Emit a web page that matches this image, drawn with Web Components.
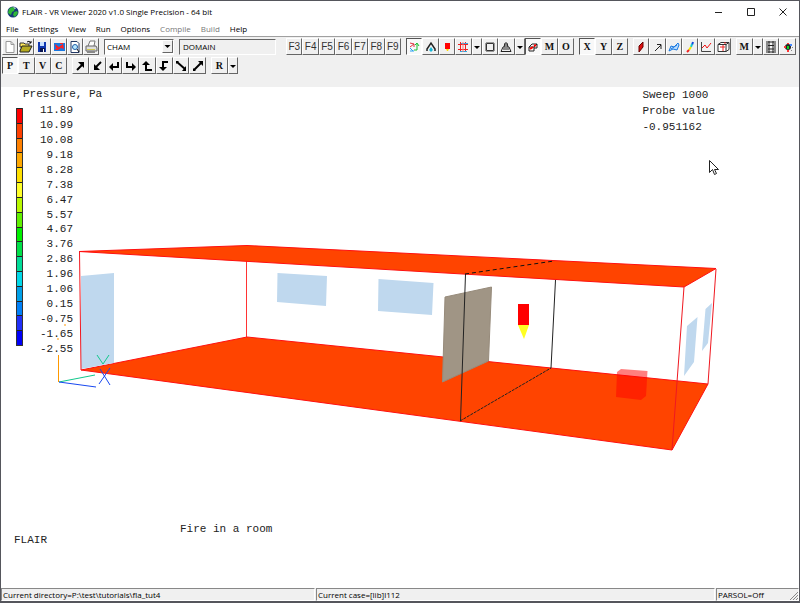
<!DOCTYPE html>
<html lang="en">
<head>
<meta charset="utf-8">
<title>FLAIR - VR Viewer</title>
<style>
html, body { margin: 0; min-height: 100%; }
body { background: #606066; font: 8px/12px "Open Sans", "Noto Sans", sans-serif; color: #000; }
</style>
</head>
<body>
<vr-window></vr-window>
<script>
const define = (name, html, setup) => {
  const t = document.createElement('template');
  t.innerHTML = html;
  customElements.define(name, class extends HTMLElement {
    constructor() {
      super();
      this.attachShadow({ mode: 'open' }).append(t.content.cloneNode(true));
    }
    connectedCallback() { if (setup) setup(this, this.shadowRoot); }
  });
};

const ICONS = {
  new: '<path d="M4 2.5h5l3 3v8H4z" fill="#fff" stroke="#999"/><path d="M9 2.5v3h3" fill="none" stroke="#999"/>',
  open: '<path d="M2 4h4l1 1h4v3H2z" fill="#ffe95a" stroke="#333"/><path d="M2 12l2-5h10l-3 6H2z" fill="#b5aa20" stroke="#222"/><path d="M9 3q2-2 4 1M13 2v2h-2" fill="none" stroke="#111"/>',
  save: '<path d="M4 3h8v10H4z" fill="#1038b0"/><path d="M6 3h4v4H6z" fill="#c8e0ff"/><path d="M6 9h5v4H6z" fill="#0a1550"/><path d="M9 10h1v3H9z" fill="#fff"/>',
  reload: '<path d="M3 4h11v8H3z" fill="#1878e0"/><path d="M4 5l4 3 4-3 1 5-3-1-3 2-2-2z" fill="#ff2020"/><path d="M4 10h3v1H4zM9 4h3v1H9z" fill="#f22"/>',
  find: '<path d="M4 2.5h6l2 2v9H4z" fill="#fff" stroke="#233a66"/><circle cx="8" cy="8" r="2.5" fill="#b8e8ff" stroke="#1e5ca8"/><path d="M10 10l2 3" stroke="#111"/>',
  print: '<path d="M5 7l2-5h5l-1 5" fill="#fff" stroke="#777"/><path d="M3 7h10l1 2v3H3z" fill="#ddd" stroke="#666"/><path d="M4 10h8v1H4z" fill="#d0c850"/><path d="M4 12h8v2H4z" fill="#888"/>',
  axes: '<path d="M4 4l4 1v3M4 8l4-3" fill="none" stroke="#e03040"/><path d="M4 9l3 3M4 12h4" fill="none" stroke="#28a0f0"/><path d="M8 11h3V5M9 6l2-2 2 3" fill="none" stroke="#18c030"/>',
  vertex: '<path d="M4 12V10l4-6 4 6v2" fill="none" stroke="#222" stroke-width="1.500"/><path d="M6 11l2-3 2 3-2 2z" fill="#18b8d8"/>',
  probe: '<path d="M6 4h5v6H6z" fill="#f00"/><path d="M7 10h3l-1 2H8z" fill="#fd0"/>',
  mesh: '<path d="M5.500 3v10M10.500 3v10M3 5.500h10M3 10.500h10" stroke="#f02020"/><path d="M5 12h7v1H5zM6 4h7v1H6z" fill="#30a8e0"/><path d="M8 3v10" stroke="#f77"/>',
  frame: '<path d="M4.500 4.500h7v7h-7z" fill="none" stroke="#333"/><path d="M4 3.500h8M4 12.500h8M3.500 4v8M12.500 4v8" stroke="#999"/>',
  wire: '<path d="M3 12.500h10L11 8H5zM6 8l1-4h2l1 4M6 6h4M5 10h6" fill="none" stroke="#222"/>',
  cube: '<path d="M4 8h5v4H4zM7 5h5v4H9M4 8l3-3M9 8l3-3" fill="none" stroke="#222"/><path d="M5 10l3-2M9 7l2-1" stroke="#f00" stroke-width="2"/>',
  slice: '<path d="M6 7l4-4v5l-4 5z" fill="#e01010" stroke="#600"/>',
  vector: '<path d="M5 12l6-6M7 5.500h4V10" fill="none" stroke="#222"/>',
  surface: '<path d="M3 12l2-5 3 1 4-4 1 2-2 5-4-1z" fill="#b8dcff" stroke="#1878e0"/><path d="M5 10l6-4" stroke="#1878e0"/>',
  stream: '<path d="M11 3l-1 3" stroke="#1048e0" stroke-width="2"/><path d="M10 5l-1 3" stroke="#18c8d0" stroke-width="2"/><path d="M9 8l-2 3" stroke="#f4e600" stroke-width="2"/><path d="M7 11l-2 2" stroke="#f02020" stroke-width="2"/>',
  chart: '<path d="M3.500 3v9.500H13" fill="none" stroke="#444"/><path d="M4 9l3-3 2 3 4-5" fill="none" stroke="#f01010"/>',
  box: '<path d="M3 5.500h8v7H3zM3 5.500l3-2h8l-3 2M14 3.500v7l-3 2" fill="#fff" stroke="#333"/><path d="M8 6v6M10 3v2M5 8h5" stroke="#e22"/>',
  film: '<path d="M4 2v12M12 2v12M6 2v12M10 2v12" stroke="#222"/><path d="M5 3h6M5 6.500h6M5 10h6M5 13h6" stroke="#222"/>',
  dots: '<circle cx="8" cy="8" r="3" fill="#222"/><path d="M4 7h2v2H4zM7 4h2v1H7zM7 11h2v2H7z" fill="#f33"/><path d="M7 7h2v3H7z" fill="#0cd020"/><path d="M10 5h2v2h-2z" fill="#48f"/><path d="M12 8h1v1h-1zM11 11h1v1h-1z" fill="#888"/>',
  ne: '<path d="M5 12l5-5" stroke="#000" stroke-width="2"/><path d="M6 4h6v6z"/>',
  sw: '<path d="M12 4L7 9" stroke="#000" stroke-width="2"/><path d="M5 6v6h6z"/>',
  left: '<path d="M12 4v5H7" fill="none" stroke="#000" stroke-width="2"/><path d="M7 5v8L3 9z"/>',
  right: '<path d="M4 4v5h5" fill="none" stroke="#000" stroke-width="2"/><path d="M9 5v8l4-4z"/>',
  up: '<path d="M13 12H7V6" fill="none" stroke="#000" stroke-width="2"/><path d="M3 7h8L7 3z"/>',
  down: '<path d="M12 4H7v6" fill="none" stroke="#000" stroke-width="2"/><path d="M3 9h8l-4 4z"/>',
  rotl: '<path d="M4 4l8 7" stroke="#000" stroke-width="2"/><path d="M3 3h3L3 6zM13 8v5H9z"/>',
  rotr: '<path d="M4 12l7-7" stroke="#000" stroke-width="2"/><path d="M8 3h5v5zM3 10v3h3z"/>',
  drop: '<path d="M5 7h6l-3 3z"/>'
};

define('tool-button', `
<style>
:host { flex: 16 0 0; min-width: 0; display: flex; }
:host([kind="drop"]) { flex: 10 0 0; }
button { flex: 1; min-width: 0; height: 17px; padding: 0; border: 1px solid; border-color: #fff #666 #666 #fff;
  background: #f0f0f0; color: #111; display: flex; align-items: center; justify-content: center; overflow: hidden;
  font: bold 10px/14px "Liberation Serif", serif; }
button.key { font: 10px/14px "Liberation Sans", sans-serif; color: #333; }
button[aria-pressed="true"] { border-color: #555 #fff #fff #555; background: #f8f8f8; }
svg { width: 16px; height: 16px; flex: none; }
</style><button type="button"></button>`, (el, root) => {
  const b = root.querySelector('button'), icon = el.getAttribute('icon');
  b.setAttribute('aria-label', el.getAttribute('label') || el.getAttribute('text') || icon);
  b.setAttribute('aria-pressed', el.hasAttribute('on'));
  if (icon) b.innerHTML = `<svg viewBox="0 0 16 16" aria-hidden="true">${ICONS[icon]}</svg>`;
  else b.textContent = el.getAttribute('text');
  if (el.getAttribute('kind') === 'key') b.className = 'key';
});

define('tool-group', `
<style>:host { display: flex; flex: none; width: var(--w); }</style><slot></slot>`,
  (el) => el.style.setProperty('--w', el.getAttribute('width') + 'px'));

define('title-bar', `
<style>
:host { display: flex; align-items: center; height: 21px; background: #fff; padding-left: 6px; }
.logo { width: 12px; height: 12px; margin-right: 3px; }
h1 { font: inherit; margin: 0; flex: 1; }
button { width: 32px; height: 20px; padding: 0; border: 0; background: none; }
button svg { width: 10px; height: 10px; display: block; margin: auto; fill: none; stroke: #222; }
</style>
<svg class="logo" viewBox="0 0 12 12" aria-hidden="true"><circle cx="6" cy="6" r="5.500" fill="#163a78"/><path d="M2 3l3-2 3 1-1 3-2 1-1 3-3-2zM7 6l3-1 1 2-3 4-2-2z" fill="#30b838"/><path d="M6 1l3 1-1 1z" fill="#e8f4ff"/></svg>
<h1>FLAIR - VR Viewer 2020 v1.0 Single Precision - 64 bit</h1>
<button type="button" aria-label="Minimize"><svg viewBox="0 0 10 10"><path d="M1 5.500h7"/></svg></button>
<button type="button" aria-label="Maximize"><svg viewBox="0 0 10 10"><path d="M1.500 1.500h7v7h-7z"/></svg></button>
<button type="button" aria-label="Close"><svg viewBox="0 0 10 10"><path d="M1.500 1.500l7 7M8.500 1.500l-7 7"/></svg></button>`);

define('menu-bar', `
<style>
:host { display: block; background: #fff; border-bottom: 1px solid #a0a0a0; }
nav { display: flex; gap: 10px; height: 14px; padding: 0 5px; align-items: center; }
button { font: inherit; padding: 0; border: 0; background: none; color: #000; }
button:disabled { color: #777; }
</style>
<nav aria-label="Menu"><button>File</button><button>Settings</button><button>View</button><button>Run</button><button>Options</button><button disabled>Compile</button><button disabled>Build</button><button>Help</button></nav>`);

define('tool-bars', `
<style>
:host { display: grid; gap: 2px; background: #f0f0f0; padding: 1px 3px 13px 1px; }
div { display: flex; height: 17px; align-items: center; }
.gap { gap: 5px; }
select, input { box-sizing: border-box; font: 8px/12px "Open Sans", sans-serif; color: #000; border-radius: 0; height: 16px; margin: 0; border: 1px solid; border-color: #666 #fff #fff #666; }
.combo { position: relative; flex: none; width: 70px; }
select { width: 100%; appearance: none; background: #fff; padding: 0 12px 0 2px; }
.combo svg { position: absolute; right: 1px; top: 2px; width: 9px; height: 11px; border: 1px solid; border-color: #fff #666 #666 #fff; background: #f0f0f0; pointer-events: none; }
input { flex: none; width: 97px; margin: 0 auto 0 0; background: #f0f0f0; padding: 0 3px; }
</style>
<div class="gap">
 <tool-group width="97"><tool-button icon="new" label="New"></tool-button><tool-button icon="open" label="Open"></tool-button><tool-button icon="save" label="Save"></tool-button><tool-button icon="reload" label="Reload"></tool-button><tool-button icon="find" label="Inspect file"></tool-button><tool-button icon="print" label="Print"></tool-button></tool-group>
 <div class="combo"><select aria-label="Object"><option>CHAM</option></select><svg viewBox="2 2 12 12" aria-hidden="true"><path d="M4 6h8l-4 4z"/></svg></div>
 <input value="DOMAIN" aria-label="Object name" readonly>
 <tool-group width="115"><tool-button kind="key" text="F3"></tool-button><tool-button kind="key" text="F4"></tool-button><tool-button kind="key" text="F5"></tool-button><tool-button kind="key" text="F6"></tool-button><tool-button kind="key" text="F7"></tool-button><tool-button kind="key" text="F8"></tool-button><tool-button kind="key" text="F9"></tool-button></tool-group>
 <tool-group width="168"><tool-button on icon="axes" label="Axes"></tool-button><tool-button icon="vertex" label="Vertices"></tool-button><tool-button icon="probe" label="Probe"></tool-button><tool-button icon="mesh" label="Mesh"></tool-button><tool-button kind="drop" icon="drop" label="Mesh options"></tool-button><tool-button icon="frame" label="Frame"></tool-button><tool-button icon="wire" label="Wireframe"></tool-button><tool-button kind="drop" icon="drop" label="Wireframe options"></tool-button><tool-button on icon="cube" label="Domain box"></tool-button><tool-button text="M"></tool-button><tool-button text="O"></tool-button></tool-group>
 <tool-group width="49"><tool-button on text="X"></tool-button><tool-button text="Y"></tool-button><tool-button text="Z"></tool-button></tool-group>
 <tool-group width="98"><tool-button icon="slice" label="Contours"></tool-button><tool-button icon="vector" label="Vectors"></tool-button><tool-button icon="surface" label="Iso-surface"></tool-button><tool-button icon="stream" label="Streamlines"></tool-button><tool-button icon="chart" label="Plot"></tool-button><tool-button icon="box" label="Box"></tool-button></tool-group>
 <tool-group width="60"><tool-button text="M" label="Macro"></tool-button><tool-button kind="drop" icon="drop" label="Macro options"></tool-button><tool-button icon="film" label="Animate"></tool-button><tool-button icon="dots" label="Particles"></tool-button></tool-group>
</div>
<div class="gap">
 <tool-group width="65"><tool-button on text="P"></tool-button><tool-button text="T"></tool-button><tool-button text="V"></tool-button><tool-button text="C"></tool-button></tool-group>
 <tool-group width="134"><tool-button icon="ne" label="Zoom out"></tool-button><tool-button icon="sw" label="Zoom in"></tool-button><tool-button icon="left" label="Turn left"></tool-button><tool-button icon="right" label="Turn right"></tool-button><tool-button icon="up" label="Turn up"></tool-button><tool-button icon="down" label="Turn down"></tool-button><tool-button icon="rotl" label="Rotate left"></tool-button><tool-button icon="rotr" label="Rotate right"></tool-button></tool-group>
 <tool-group width="27"><tool-button text="R" label="Reset"></tool-button><tool-button kind="drop" icon="drop" label="Reset options"></tool-button></tool-group>
</div>`);

define('colour-legend', `
<style>
:host { display: block; }
h2 { font: inherit; margin: 0 0 0 7px; }
.scale { display: grid; grid-template-columns: 7px 50px; }
.bar { display: grid; height: 238px; margin-top: 6px; border: 1px solid #333; border-top: 0; box-sizing: border-box; }
.bar i { border-top: 1px solid #222; }
ol { list-style: none; margin: 1px 0 0; padding: 0; height: 253px; line-height: 14px; display: grid; text-align: right; align-items: center; }
</style>
<h2>Pressure, Pa</h2>
<div class="scale"><div class="bar"></div><ol></ol></div>`, (el, root) => {
  root.querySelector('.bar').innerHTML = ['#f00', '#ff4000', '#ff8000', '#ffa800', '#ffe000', '#ffff28', '#b8f800', '#60f000', '#00f000', '#00e048', '#00dc98', '#00d8e8', '#00a0e8', '#0080f8', '#2030f8', '#0000f8']
    .map(c => `<i style="background:${c}"></i>`).join('');
  root.querySelector('ol').innerHTML = '11.89 10.99 10.08 9.18 8.28 7.38 6.47 5.57 4.67 3.76 2.86 1.96 1.06 0.15 -0.75 -1.65 -2.55'.split(' ')
    .map(v => `<li>${v}</li>`).join('');
});

define('room-scene', `
<style>
:host { display: block; }
svg { display: block; width: 100%; height: auto; }
</style>
<svg viewBox="1 87 798 501" fill="none" role="img" aria-label="Room geometry">
 <path d="M246.500 246V337" stroke="#f33"/>
 <path d="M81 370L247 337L708 384L672 450Z" fill="#ff4400" stroke="#ff1010"/>
 <path d="M79 251.500L247 245.500L716 268.500L684 287Z" fill="#ff4400" stroke="#ff1010"/>
 <path d="M81 276L114 273V363L81 369Z M277.500 273L327 276L326 306L277 302Z M378.500 279L433.500 283L432 315L378 311Z M687 326L697.500 317L694 362L684 376Z M705.500 309L712 303L708 343L702 351Z" fill="#bfd8ee"/>
 <path d="M79.500 251L81 370M716 269L708 384M684 287L672 450" stroke="#f01820"/>
 <path d="M445 297L491.500 287L488.500 361L442.500 382Z" fill="#a09585" stroke="#978b7b"/>
 <path d="M465.500 274L460.500 421M555.500 280L551 368" stroke="#222"/>
 <path d="M465 274L554 261" stroke="#111" stroke-dasharray="4 3"/>
 <path d="M460 421L551 368" stroke="#222" stroke-dasharray="3 1"/>
 <path d="M518 304h11v21h-11z" fill="#f00"/><path d="M518 325h11l-5 14z" fill="#ff2"/>
 <path d="M617 372L621 369L647.500 371L646 396L641 400L616 397Z" fill="#f00" fill-opacity=".5"/>
 <path d="M58.500 355V382M64 325h2M57 339h2" stroke="#f90"/>
 <path d="M59 382L95 375M97 355L103 364L109 355" stroke="#12c88c"/>
 <path d="M59 382L96 387M99 384L110 368M100 369L110 385" stroke="#1848f0"/>
 <path d="M709.500 160.500v12l3-3 2 5 2-1-2-4h4z" fill="#fff" stroke="#222"/>
</svg>`);

define('view-port', `
<style>
:host { position: relative; display: grid; flex: 1; grid-template-columns: 1fr auto; grid-template-rows: 1fr auto; background: #fff;
  font: 11px/15px "Liberation Mono", monospace; color: #222; }
room-scene { position: absolute; inset: 0; }
colour-legend, dl, footer { position: relative; }
colour-legend { padding: 0 0 0 15px; }
dl { margin: 0; padding: 0 84px 0 0; line-height: 16px; }
dt, dd { margin: 0; }
footer { grid-column: 1 / -1; padding: 0 13px 42px; line-height: 11px; }
footer p { margin: 0; }
.case { padding-left: 166px; }
</style>
<room-scene></room-scene>
<colour-legend></colour-legend>
<dl><dt>Sweep 1000</dt><dt>Probe value</dt><dd>-0.951162</dd></dl>
<footer><p class="case">Fire in a room</p><p>FLAIR</p></footer>`);

define('status-bar', `
<style>
:host { display: grid; grid-template-columns: 314fr 399fr 83fr; gap: 1px; background: #f0f0f0; }
span { border: 1px solid; border-color: #888 #fff #fff #888; padding-left: 1px; height: 11px; line-height: 11px; white-space: nowrap; }
.last { display: flex; justify-content: space-between; align-items: end; }
svg { width: 9px; height: 9px; stroke: #888; }
</style>
<span>Current directory=P:\\test\\tutorials\\fla_tut4</span><span>Current case=[lib]l112</span>
<span class="last">PARSOL=Off<svg viewBox="0 0 9 9" aria-hidden="true"><path d="M1 9l8-8M4 9l5-5M7 9l2-2"/></svg></span>`);

define('vr-window', `
<style>
:host { display: flex; flex-direction: column; box-sizing: border-box; min-height: 100vh; border: 1px solid #55565c; border-bottom-width: 2px; }
</style>
<title-bar></title-bar><menu-bar></menu-bar><tool-bars></tool-bars><view-port></view-port><status-bar></status-bar>`);
</script>
</body>
</html>
